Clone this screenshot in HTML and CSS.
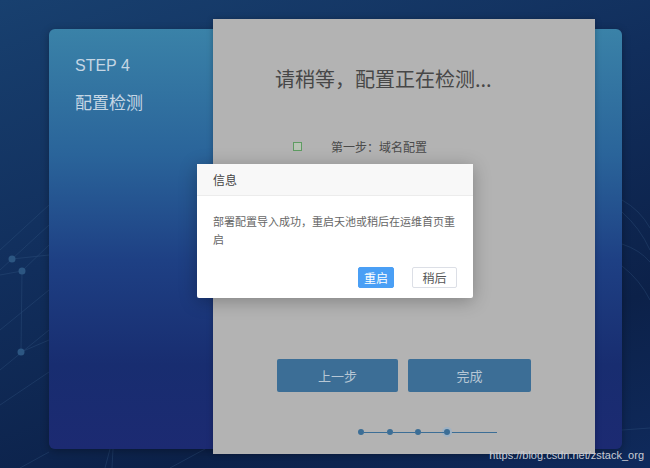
FILE: index.html
```html
<!DOCTYPE html>
<html lang="zh-CN">
<head>
    <meta charset="UTF-8">
    <meta name="viewport" content="width=device-width, initial-scale=1.0">
    <title>配置检测</title>
    <link rel="stylesheet" href="styles.css">
</head>
<body>

    <!-- background network lines -->
    <svg class="bg-net" width="650" height="468" viewBox="0 0 650 468">
        <g stroke="#3a5f8c" stroke-width="0.6" fill="none" opacity="0.5">
            <line x1="0" y1="250" x2="49" y2="205"/>
            <line x1="0" y1="270" x2="49" y2="225"/>
            <line x1="12" y1="259" x2="49" y2="255"/>
            <line x1="0" y1="275" x2="22" y2="271"/>
            <line x1="22" y1="271" x2="21" y2="352"/>
            <line x1="22" y1="271" x2="49" y2="245"/>
            <line x1="0" y1="330" x2="49" y2="290"/>
            <line x1="0" y1="370" x2="49" y2="330"/>
            <line x1="21" y1="352" x2="49" y2="340"/>
            <line x1="0" y1="405" x2="49" y2="372"/>
            <line x1="20" y1="468" x2="49" y2="452"/>
            <path d="M622 200 Q640 210 650 228"/>
            <path d="M622 212 Q640 228 650 250"/>
            <path d="M622 244 Q640 250 650 262"/>
            <path d="M622 266 Q640 280 650 300"/>
            <line x1="622" y1="430" x2="650" y2="428"/>
            <line x1="105" y1="468" x2="110" y2="449"/>
            <line x1="112" y1="468" x2="113" y2="449"/>
            <line x1="170" y1="468" x2="205" y2="449"/>
        </g>
        <g fill="#2c5682">
            <circle cx="12" cy="259" r="3.5"/>
            <circle cx="22" cy="271" r="3.5"/>
            <circle cx="21" cy="352" r="3.5"/>
        </g>
    </svg>

    <div class="wizard">
        <div class="wizard-side">
            <div class="step-no">STEP 4</div>
            <div class="step-name">配置检测</div>
        </div>

        <div class="wizard-main">
            <h2 class="main-title">请稍等，配置正在检测...</h2>

            <div class="check-row">
                <span class="check-box"></span>
                <span class="check-label">第一步：域名配置</span>
            </div>

            <div class="spacer"></div>

            <div class="action-row">
                <button class="btn-step">上一步</button>
                <button class="btn-step btn-wide">完成</button>
            </div>

            <div class="progress">
                <span class="dot"></span>
                <span class="dot"></span>
                <span class="dot"></span>
                <span class="dot dot-current"></span>
                <span class="tail"></span>
            </div>
        </div>
    </div>

    <!-- message box -->
    <div class="msg-box">
        <div class="msg-header">信息</div>
        <div class="msg-body">部署配置导入成功，重启天池或稍后在运维首页重启</div>
        <div class="msg-footer">
            <button class="msg-btn msg-primary">重启</button>
            <button class="msg-btn msg-plain">稍后</button>
        </div>
    </div>

    <div class="watermark">https://blog.csdn.net/zstack_org</div>

</body>
</html>
```

FILE: styles.css
```css
* {
    box-sizing: border-box;
}

html, body {
    height: 100%;
}

body {
    margin: 0;
    overflow: hidden;
    font-family: "Liberation Sans", "Noto Sans CJK SC", sans-serif;
    background: linear-gradient(160deg, #18406f 0%, #112e5c 40%, #0c2149 75%, #0f2a5c 100%);
    padding: 29px 0 0 49px;
}

.bg-net {
    position: absolute;
    left: 0;
    top: 0;
}

.wizard {
    position: relative;
    width: 573px;
    height: 420px;
    border-radius: 6px;
    background: linear-gradient(180deg, #3a82a8 0%, #2a649a 30%, #1e4084 55%, #182d70 80%, #1c2a72 100%);
    box-shadow: 0 2px 8px rgba(0, 0, 0, 0.3);
    display: flex;
}

.wizard-side {
    width: 164px;
    padding: 27px 0 0 26px;
    color: #c5d6e4;
}

.step-no {
    font-size: 16px;
    line-height: 20px;
}

.step-name {
    margin-top: 17px;
    font-size: 17px;
    line-height: 22px;
}

.wizard-main {
    width: 382px;
    height: 435px;
    margin-top: -10px;
    background-color: #b3b3b3;
    box-shadow: 0 0 6px rgba(0, 0, 0, 0.25);
    display: flex;
    flex-direction: column;
}

.main-title {
    margin: 46px 0 0 62px;
    font-size: 20px;
    font-weight: normal;
    line-height: 28px;
    color: #474747;
    font-family: "Noto Sans CJK SC", sans-serif;
}

.check-row {
    margin: 44px 0 0 80px;
    display: flex;
    align-items: center;
    height: 18px;
}

.check-box {
    width: 9px;
    height: 9px;
    border: 1px solid #5e9c62;
    background-color: #b9c4b6;
}

.check-label {
    margin-left: 29px;
    font-size: 12px;
    color: #4a4a4a;
}

.spacer {
    flex: 1;
}

.action-row {
    display: flex;
    gap: 10px;
    padding-left: 64px;
}

.btn-step {
    width: 121px;
    height: 33px;
    border: none;
    border-radius: 2px;
    background-color: #3c6e96;
    color: #b7c7d5;
    font-size: 13px;
    font-family: "Noto Sans CJK SC", sans-serif;
}

.btn-wide {
    width: 123px;
}

.progress {
    display: flex;
    align-items: center;
    margin: 36px 0 18px 145px;
    height: 8px;
}

.dot {
    width: 6px;
    height: 6px;
    border-radius: 50%;
    background-color: #3c6e96;
}

.progress .dot:not(:first-child) {
    margin-left: 22.5px;
    position: relative;
}

.progress .dot:not(:first-child)::before {
    content: "";
    position: absolute;
    right: 6px;
    top: 2.5px;
    width: 22.5px;
    height: 1px;
    background-color: #3c6e96;
}

.dot-current {
    box-shadow: 0 0 0 2px #9fb2c4;
}

.tail {
    width: 47px;
    height: 1px;
    background-color: #3c6e96;
}

.msg-box {
    position: absolute;
    left: 197px;
    top: 164px;
    width: 276px;
    height: 134px;
    background-color: #fff;
    border-radius: 2px;
    box-shadow: 0 3px 18px rgba(0, 0, 0, 0.28);
    font-family: "Noto Sans CJK SC", sans-serif;
}

.msg-header {
    height: 32px;
    line-height: 32px;
    padding-left: 16px;
    background-color: #f8f8f8;
    border-bottom: 1px solid #ececec;
    font-size: 12px;
    color: #444;
}

.msg-body {
    padding: 16px 16px 0;
    font-size: 11px;
    line-height: 18px;
    color: #666;
}

.msg-footer {
    display: flex;
    justify-content: flex-end;
    gap: 18px;
    padding-right: 16px;
    margin-top: 19px;
}

.msg-btn {
    height: 21px;
    padding: 0;
    border-radius: 2px;
    font-size: 12px;
    font-family: "Noto Sans CJK SC", sans-serif;
}

.msg-primary {
    width: 36px;
    background-color: #4a9ff5;
    border: 1px solid #4a9ff5;
    color: #fff;
}

.msg-plain {
    width: 45px;
    background-color: #fff;
    border: 1px solid #dcdfe6;
    color: #555;
}

.watermark {
    position: absolute;
    right: 6px;
    bottom: 7px;
    font-size: 11px;
    color: #c8ccd4;
}
```
